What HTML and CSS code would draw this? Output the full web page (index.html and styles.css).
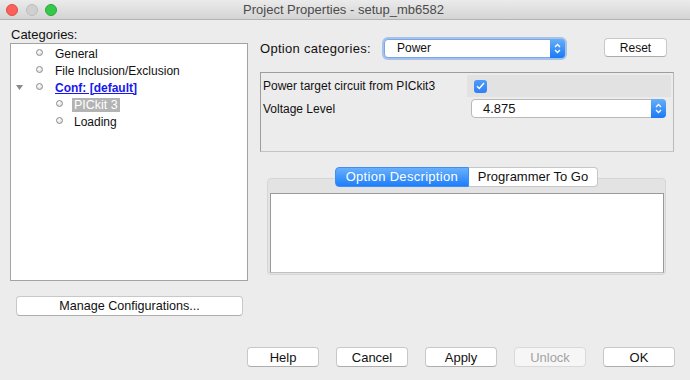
FILE: index.html
```html
<!DOCTYPE html>
<html lang="en">
<head>
    <meta charset="UTF-8">
    <title>Project Properties - setup_mb6582</title>
    <link rel="stylesheet" href="styles.css">
</head>
<body>
    <div class="titlebar">
        <div class="lights">
            <span class="light close"></span>
            <span class="light min"></span>
            <span class="light max"></span>
        </div>
        <div class="title">Project Properties - setup_mb6582</div>
    </div>

    <div class="dialog">
        <div class="main">
            <div class="left">
                <div class="cat-label">Categories:</div>
                <div class="tree">
                    <div class="node">
                        <span class="twisty"></span><span class="bullet"></span><span class="label">General</span>
                    </div>
                    <div class="node">
                        <span class="twisty"></span><span class="bullet"></span><span class="label">File Inclusion/Exclusion</span>
                    </div>
                    <div class="node">
                        <svg class="twisty" width="7" height="5" viewBox="0 0 7 5"><polygon points="0,0 7,0 3.5,5" fill="#8a8a8a"/></svg><span class="bullet"></span><span class="label link">Conf: [default]</span>
                    </div>
                    <div class="node child">
                        <span class="bullet"></span><span class="label selected">PICkit 3</span>
                    </div>
                    <div class="node child">
                        <span class="bullet"></span><span class="label">Loading</span>
                    </div>
                </div>
                <button class="btn manage">Manage Configurations...</button>
            </div>

            <div class="right">
                <div class="opt-row">
                    <span class="opt-label">Option categories:</span>
                    <div class="select focused">
                        <span class="value">Power</span>
                        <span class="stepper">
                            <svg width="7" height="11" viewBox="0 0 7 11" fill="none" stroke="#fff" stroke-width="1.3">
                                <polyline points="1,4 3.5,1.5 6,4"/>
                                <polyline points="1,7 3.5,9.5 6,7"/>
                            </svg>
                        </span>
                    </div>
                    <button class="btn reset">Reset</button>
                </div>

                <div class="props">
                    <div class="prop-name">Power target circuit from PICkit3</div>
                    <div class="prop-value shaded">
                        <span class="checkbox">
                            <svg width="9" height="8" viewBox="0 0 9 8" fill="none" stroke="#fff" stroke-width="1.5">
                                <polyline points="1,4.2 3.3,6.5 8,1"/>
                            </svg>
                        </span>
                    </div>
                    <div class="prop-name">Voltage Level</div>
                    <div class="prop-value">
                        <div class="select voltage">
                            <span class="value">4.875</span>
                            <span class="stepper">
                                <svg width="7" height="11" viewBox="0 0 7 11" fill="none" stroke="#fff" stroke-width="1.3">
                                    <polyline points="1,4 3.5,1.5 6,4"/>
                                    <polyline points="1,7 3.5,9.5 6,7"/>
                                </svg>
                            </span>
                        </div>
                    </div>
                </div>

                <div class="tabs">
                    <span class="tab active">Option Description</span>
                    <span class="tab">Programmer To Go</span>
                </div>
                <div class="tab-box">
                    <div class="desc"></div>
                </div>
            </div>
        </div>

        <div class="footer">
            <button class="btn">Help</button>
            <button class="btn">Cancel</button>
            <button class="btn">Apply</button>
            <button class="btn" disabled>Unlock</button>
            <button class="btn">OK</button>
        </div>
    </div>
</body>
</html>
```

FILE: styles.css
```css
* {
    box-sizing: border-box;
    margin: 0;
    padding: 0;
    font-family: "Liberation Sans", Arial, sans-serif;
}

body {
    width: 690px;
    height: 380px;
    overflow: hidden;
    background-color: #ececec;
    color: #1a1a1a;
    font-size: 12px;
}

.titlebar {
    height: 20px;
    display: grid;
    grid-template-columns: 1fr auto 1fr;
    align-items: center;
    background: linear-gradient(#ebebeb, #d4d4d4);
    border-bottom: 1px solid #b3b3b3;
}

.lights {
    display: flex;
    gap: 7.5px;
    padding-left: 6px;
}

.light {
    width: 12px;
    height: 12px;
    border-radius: 50%;
}

.close {
    background: #fc605b;
    border: 1px solid #de4c46;
}

.min {
    background: #d0d0d0;
    border: 1px solid #bdbdbd;
}

.max {
    background: #35c84a;
    border: 1px solid #28a93b;
}

.title {
    font-size: 13px;
    color: #4b4b4b;
    margin-left: -3px;
}

.dialog {
    padding: 0 15px 0 10px;
}

.main {
    display: flex;
    gap: 12px;
}

/* left column */
.left {
    width: 238px;
}

.cat-label {
    height: 23px;
    padding: 7px 0 0 1px;
    font-size: 13px;
    line-height: 15px;
    color: #111;
}

.tree {
    height: 238px;
    background: #fff;
    border: 1px solid #a3a3a3;
    padding-top: 1px;
}

.node {
    display: flex;
    align-items: center;
    height: 17px;
    padding-left: 5px;
}

.node.child {
    padding-left: 45px;
}

.twisty {
    width: 7px;
    height: 5px;
    margin-right: 13px;
    flex-shrink: 0;
}

.bullet {
    width: 7px;
    height: 7px;
    margin-top: -3px;
    border-radius: 50%;
    border: 1px solid #8d8d8d;
    background: radial-gradient(circle at 40% 35%, #fff, #d2d2d2);
    flex-shrink: 0;
}

.label {
    margin-left: 10px;
    padding: 0 2px;
    line-height: 14px;
    color: #111;
}

.node.child .label {
    margin-left: 9px;
}

.label.link {
    color: #1717f0;
    font-weight: bold;
    text-decoration: underline;
}

.label.selected {
    background: #b3b3b3;
    color: #fff;
    font-size: 12.5px;
}

.btn {
    height: 20px;
    background: #fff;
    border: 1px solid #c8c8c8;
    border-bottom-color: #adadad;
    border-radius: 4px;
    font-size: 13px;
    color: #111;
}

.btn:disabled {
    background: #f6f6f6;
    border-color: #d9d9d9;
    color: #a3a3a3;
}

.manage {
    width: 227px;
    margin: 15px 0 0 6px;
    font-size: 12.6px;
}

/* right column */
.right {
    width: 414px;
}

.opt-row {
    display: flex;
    align-items: center;
    height: 21px;
    margin-top: 18px;
}

.opt-label {
    width: 124px;
    font-size: 13px;
    letter-spacing: 0.3px;
    color: #111;
}

.select {
    display: flex;
    align-items: stretch;
    height: 19px;
    background: #fff;
    border: 1px solid #b8b8b8;
    border-radius: 4px;
}

.select .value {
    flex: 1;
    line-height: 17px;
    font-size: 12px;
    color: #111;
}

.select.focused {
    width: 181px;
    border-color: #7aa6e6;
    box-shadow: 0 0 0 2px rgba(110, 160, 235, 0.55);
}

.select.focused .value {
    padding-left: 12px;
}

.stepper {
    width: 15px;
    margin: -1px -1px -1px 0;
    display: flex;
    align-items: center;
    justify-content: center;
    background: linear-gradient(#66aff9, #1b79f5);
    border-radius: 0 4px 4px 0;
}

.reset {
    width: 63px;
    height: 19px;
    margin: -2px 0 0 39px;
    font-size: 12px;
}

.props {
    height: 80px;
    margin-top: 13px;
    display: grid;
    grid-template-columns: 205px 1fr;
    grid-template-rows: 22px 23px;
    align-content: start;
    padding: 2px 2px 0 1px;
    background: #ececec;
    border: 1px solid #9d9d9d;
    border-right-color: #b9b9b9;
    border-bottom-color: #c4c4c4;
}

.prop-name {
    display: flex;
    align-items: center;
    padding-left: 1px;
    font-size: 12px;
    color: #111;
}

.prop-value {
    display: flex;
    align-items: center;
}

.prop-value.shaded {
    background: #e2e2e2;
}

.checkbox {
    width: 13px;
    height: 13px;
    margin-left: 7px;
    display: flex;
    align-items: center;
    justify-content: center;
    background: linear-gradient(#4f9bfa, #2e7ff5);
    border-radius: 3px;
}

.select.voltage {
    flex: 1;
    margin: 0 5px 0 4px;
}

.select.voltage .value {
    padding-left: 11px;
    font-size: 13px;
}

.tabs {
    position: relative;
    z-index: 1;
    display: flex;
    justify-content: center;
    width: 399px;
    margin: 15px 0 0 7px;
}

.tab {
    height: 20px;
    line-height: 18px;
    padding: 0 9px;
    background: #fff;
    border: 1px solid #c6c6c6;
    border-left: none;
    border-radius: 0 4px 4px 0;
    font-size: 13px;
    color: #111;
}

.tab.active {
    width: 134px;
    padding: 0;
    text-align: center;
    letter-spacing: 0.3px;
    background: linear-gradient(#69b0fb, #1d7efa);
    border: 1px solid #3f8ef5;
    border-radius: 4px 0 0 4px;
    color: #fff;
}

.tab-box {
    width: 399px;
    height: 97px;
    margin: -9px 0 0 7px;
    padding: 14px 1px 1px 2px;
    background: #e3e3e3;
    border: 1px solid #d6d6d6;
    border-radius: 4px;
}

.desc {
    height: 100%;
    background: #fff;
    border: 1px solid #9a9a9a;
    border-bottom-color: #c0c0c0;
}

.footer {
    display: flex;
    justify-content: flex-end;
    gap: 17px;
    margin-top: 31px;
}

.footer .btn {
    width: 72px;
}
```
